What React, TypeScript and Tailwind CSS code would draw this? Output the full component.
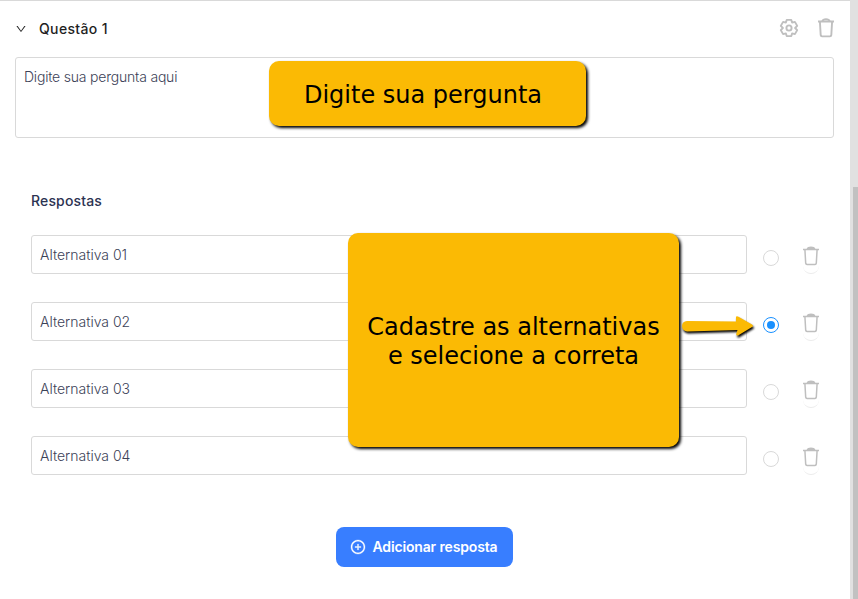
import { AiOutlineDown, AiOutlinePlusCircle } from 'react-icons/ai';

const answers = [
  { label: 'Alternativa 01', correct: false },
  { label: 'Alternativa 02', correct: true },
  { label: 'Alternativa 03', correct: false },
  { label: 'Alternativa 04', correct: false },
];

const GearIcon: React.FC<{ className?: string }> = ({ className }) => (
  <svg viewBox="0 0 20 20" fill="none" stroke="currentColor" strokeWidth="1.9" strokeLinejoin="round" className={className}>
    <path d="M7.700 1.900h4.600L13.100 4.600l2.800-.7L18.200 7.900 16.100 10l2.100 2.100-2.300 4-2.800-.7-.8 2.700H7.700L6.900 15.400l-2.800.7-2.300-4L3.900 10 1.800 7.900l2.300-4 2.800.7z" />
    <circle cx="10" cy="10" r="2.6" />
  </svg>
);

const TrashIcon: React.FC<{ className?: string; strokeWidth?: number; solidLid?: boolean }> = ({
  className,
  strokeWidth = 1.5,
  solidLid,
}) => (
  <svg viewBox="0 0 16 20" fill="none" stroke="currentColor" strokeWidth={strokeWidth} strokeLinejoin="round" className={className}>
    <path d="M4.300 3.200C4.800 1.800 5.800 1.300 8 1.300s3.200 .5 3.700 1.900" fill={solidLid ? 'currentColor' : 'none'} />
    <path d="M0 3.500h16M1.900 3.500l.8 13.700c.1.800.5 1.200 1.300 1.200h8c.8 0 1.200-.4 1.300-1.200L14.100 3.500" />
  </svg>
);

const AnswerRow: React.FC<{ label: string; correct: boolean }> = ({ label, correct }) => (
  <div className="flex h-[39px]">
    <div className="flex w-[716px] items-center rounded-[3px] border border-[#d9d9d9] px-2 pt-px text-sm font-light text-[#3c4257]">
      {label}
    </div>
    <div
      className={`ml-4 mt-[15px] flex size-4 items-center justify-center rounded-full border ${
        correct ? 'border-[#1890ff]' : 'border-[#d9d9d9]'
      }`}
    >
      {correct && <span className="size-2 rounded-full bg-[#1890ff]" />}
    </div>
    <div className="ml-6 mt-[11px] flex h-7 w-4 flex-col rounded-b-full border-b border-[#ececec] text-[#bfbfbf]">
      <TrashIcon className="h-5 w-4" solidLid />
    </div>
  </div>
);

const App: React.FC = () => {
  return (
    <div className="relative flex h-[599px] w-[858px] overflow-hidden bg-white font-['Inter',sans-serif]">
      <main className="flex w-[850px] flex-col border-t border-[#d9d9d9] pl-[15px] pr-4">
        <header className="flex h-14 items-center">
          <AiOutlineDown className="size-3 text-[#262626]" />
          <h2 className="ml-3 text-sm font-medium tracking-[0.35px] text-[#1f1f1f]">Questão 1</h2>
          <GearIcon className="mb-0.5 ml-auto size-5 text-[#bfbfbf]" />
          <TrashIcon className="mb-0.5 ml-[19px] h-5 w-4 text-[#bfbfbf]" strokeWidth={1.9} />
        </header>

        <div className="h-[81px] rounded-[3px] border border-[#d9d9d9] px-2 py-[9px] text-sm font-light tracking-[-0.2px] text-[#3c4257]">
          Digite sua pergunta aqui
        </div>

        <section className="flex flex-col pl-4 pt-[53px]">
          <h3 className="text-sm font-medium tracking-[0.15px] text-[#2c3352]">Respostas</h3>
          <div className="mt-6 flex flex-col gap-7">
            {answers.map((answer) => (
              <AnswerRow key={answer.label} {...answer} />
            ))}
          </div>
        </section>

        <button className="mt-[52px] ml-[321px] flex h-10 w-[177px] items-center gap-[7px] rounded-lg bg-[#387eff] pl-[13.5px] text-sm font-semibold tracking-[-0.15px] text-white">
          <AiOutlinePlusCircle className="size-4" stroke="currentColor" strokeWidth={20} />
          Adicionar resposta
        </button>
      </main>

      <div className="w-2 bg-[#e1e1e1] pl-[3px] pt-[187px]">
        <div className="h-[412px] bg-[#c1c1c1]" />
      </div>

      {/* Instruction callouts over the form */}
      <div className="absolute left-[269px] top-[61px] flex h-[65px] w-[317px] items-center justify-center rounded-[10px] bg-[#fbba04] pr-[9px] pt-[3px] font-['DejaVu_Sans',sans-serif] text-2xl text-black shadow-[2px_2px_3px_#000000]">
        Digite sua pergunta
      </div>
      <div className="absolute left-[348px] top-[233px] flex h-[214px] w-[331px] items-center justify-center rounded-[10px] bg-[#fbba04] pt-1 text-center font-['DejaVu_Sans',sans-serif] text-2xl leading-[29px] text-black shadow-[2px_2px_3px_#000000]">
        Cadastre as alternativas
        <br />e selecione a correta
      </div>
      <svg
        viewBox="0 0 80 36"
        className="absolute left-[678px] top-[308px] h-9 w-20 drop-shadow-[1px_2px_1px_#000000]"
      >
        <path
          d="M9 13L58 13.500V9.500Q58 7.500 60 8.500L74 16.500Q76 18 74 19L60 27.500Q57.500 28 58.500 25L59.500 22L9 23.500Q4 22.500 4 18Q4 13.500 9 13Z"
          fill="#fbba04"
        />
      </svg>
    </div>
  );
};

export default App;
